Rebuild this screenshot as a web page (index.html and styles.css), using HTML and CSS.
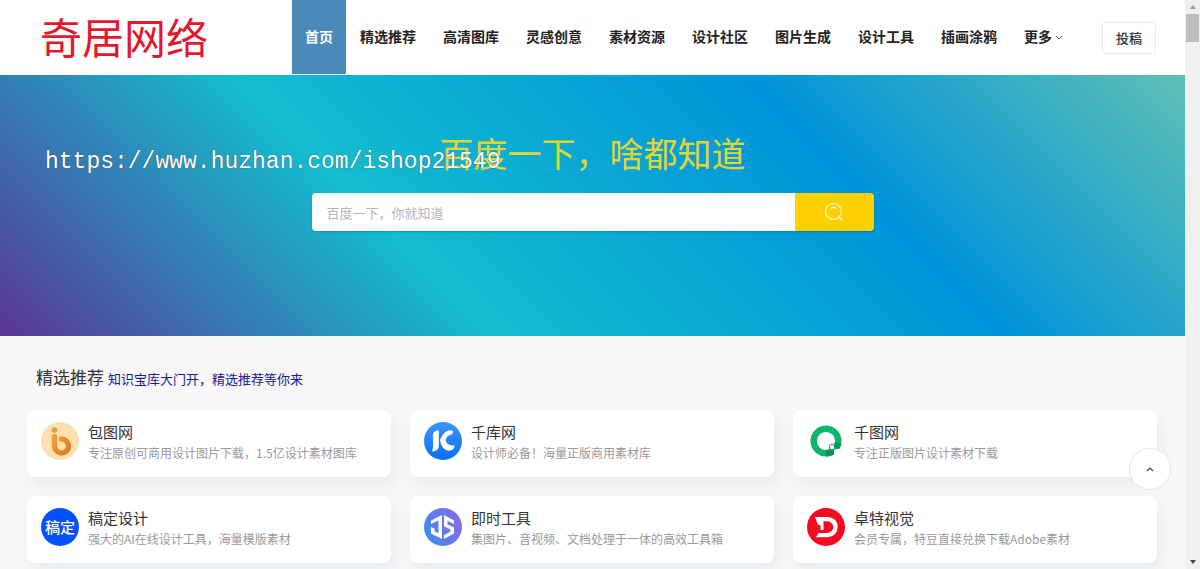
FILE: index.html
```html
<!DOCTYPE html>
<html lang="zh-CN">
<head>
    <meta charset="UTF-8">
    <meta name="viewport" content="width=device-width, initial-scale=1.0">
    <title>奇居网络</title>
    <link rel="stylesheet" href="styles.css">
</head>
<body>
    <div class="page">
        <header class="header">
            <a class="logo" href="#">奇居网络</a>
            <nav class="nav">
                <a class="active" href="#">首页</a>
                <a href="#">精选推荐</a>
                <a href="#">高清图库</a>
                <a href="#">灵感创意</a>
                <a href="#">素材资源</a>
                <a href="#">设计社区</a>
                <a href="#">图片生成</a>
                <a href="#">设计工具</a>
                <a href="#">插画涂鸦</a>
                <a href="#">更多
                    <svg width="8" height="6" viewBox="0 0 8 6"><path d="M1 1l3 3 3-3" fill="none" stroke="#555" stroke-width="1"/></svg>
                </a>
            </nav>
            <button class="post" type="button">投稿</button>
        </header>

        <section class="hero">
            <h1>百度一下，啥都知道</h1>
            <form class="search">
                <input type="text" placeholder="百度一下，你就知道" aria-label="百度一下，你就知道">
                <button type="button" aria-label="搜索">
                    <svg width="20" height="20" viewBox="0 0 20 20" fill="none" stroke="#fff6c8" stroke-width="1.3" stroke-linecap="round">
                        <circle cx="9.5" cy="9.5" r="7.9"/>
                        <path d="M15 15l3.2 3M7 6.200q2.500-1.500 5 0"/>
                    </svg>
                </button>
            </form>
            <span class="site-url">https://www.huzhan.com/ishop21549</span>
        </section>

        <main class="content">
            <div class="section-title">
                <h2>精选推荐</h2>
                <a href="#">知识宝库大门开，精选推荐等你来</a>
            </div>
            <div class="cards">
                <a class="card" href="#">
                    <svg class="icon" viewBox="0 0 38 38">
                        <defs>
                            <linearGradient id="bao" x1="0" y1="0" x2="1" y2="1">
                                <stop offset="0" stop-color="#eda23b"/>
                                <stop offset="1" stop-color="#dc7d20"/>
                            </linearGradient>
                        </defs>
                        <circle cx="19" cy="19" r="19" fill="#fde0b0"/>
                        <circle cx="13.500" cy="8" r="2.800" fill="#e0a045"/>
                        <path d="M13.500 14.500v9.500a7 7 0 1 0 7-7" fill="none" stroke="url(#bao)" stroke-width="5.400" stroke-linecap="round"/>
                    </svg>
                    <div class="info">
                        <h3>包图网</h3>
                        <p>专注原创可商用设计图片下载，1.5亿设计素材图库</p>
                    </div>
                </a>
                <a class="card" href="#">
                    <svg class="icon" viewBox="0 0 38 38">
                        <defs>
                            <linearGradient id="qian" x1="0" y1="0" x2="0" y2="1">
                                <stop offset="0" stop-color="#3d95fb"/>
                                <stop offset="1" stop-color="#0b6ff5"/>
                            </linearGradient>
                        </defs>
                        <circle cx="19" cy="19" r="19" fill="url(#qian)"/>
                        <path d="M9 12q1-3.500 5.800-3.500V25q-.8 4-6.800 4.500l1-4z" fill="#fff"/>
                        <path d="M16 18q3-7.500 8.500-9.500h4q1.500 3.500-2.500 4.500-4.200 1.500-4.200 5.800 1 5 9 4.700-.8 5-6 5.200-7.200-.7-8.800-10.700z" fill="#fff"/>
                    </svg>
                    <div class="info">
                        <h3>千库网</h3>
                        <p>设计师必备！海量正版商用素材库</p>
                    </div>
                </a>
                <a class="card" href="#">
                    <svg class="icon" viewBox="0 0 38 38">
                        <circle cx="19" cy="19" r="12.300" fill="none" stroke="#0db56d" stroke-width="6.400"/>
                        <path d="M31.200 20.500A12.300 12.300 0 0 1 19 31.300" fill="none" stroke="#07965a" stroke-width="6.400"/>
                        <path d="M27 27.500l8-1v9h-8z" fill="#fff"/>
                        <circle cx="25" cy="25" r="2.800" fill="#fff" stroke="#0a9d60" stroke-width="1"/>
                    </svg>
                    <div class="info">
                        <h3>千图网</h3>
                        <p>专注正版图片设计素材下载</p>
                    </div>
                </a>
                <a class="card" href="#">
                    <span class="icon icon-gaoding">稿定</span>
                    <div class="info">
                        <h3>稿定设计</h3>
                        <p>强大的AI在线设计工具，海量模版素材</p>
                    </div>
                </a>
                <a class="card" href="#">
                    <svg class="icon" viewBox="0 0 38 38">
                        <defs>
                            <linearGradient id="jishi" x1="0" y1=".7" x2="1" y2=".3">
                                <stop offset="0" stop-color="#3e8bf0"/>
                                <stop offset="1" stop-color="#8a6be6"/>
                            </linearGradient>
                        </defs>
                        <circle cx="19" cy="19" r="19" fill="url(#jishi)"/>
                        <path d="M7 12.500L18 7v24L7 25.500V19l3.500 1.500v2.700l4 2.100V12.500L7 16z" fill="#fff"/>
                        <path d="M20 7l10 5.500V16l-6.500-3.300v3.500l6.500 3.300v6L20 31v-3.800l6.500-3.700v-2L20 18.200z" fill="#fff"/>
                    </svg>
                    <div class="info">
                        <h3>即时工具</h3>
                        <p>集图片、音视频、文档处理于一体的高效工具箱</p>
                    </div>
                </a>
                <a class="card" href="#">
                    <svg class="icon" viewBox="0 0 38 38">
                        <circle cx="19" cy="19" r="19" fill="#f50a20"/>
                        <path d="M8 9h13q9.500 1.200 9.800 9.800-.8 9.500-9.800 10.500H8.800l3-4.300H20q6-.8 6.300-6-.3-5.300-6.300-5.800h-3.500V22h-3v-5H11z" fill="#fff"/>
                    </svg>
                    <div class="info">
                        <h3>卓特视觉</h3>
                        <p>会员专属，特豆直接兑换下载Adobe素材</p>
                    </div>
                </a>
            </div>
        </main>
    </div>

    <div class="scrollbar">
        <svg width="8" height="14" viewBox="0 0 8 14"><path d="M1 9l3-4 3 4z" fill="#999"/></svg>
        <div class="thumb"></div>
        <svg class="down" width="8" height="14" viewBox="0 0 8 14"><path d="M1 5h6L4 9z" fill="#444"/></svg>
    </div>

    <button class="to-top" type="button" aria-label="返回顶部">
        <svg width="8" height="6" viewBox="0 0 8 6"><path d="M1 5l3-3 3 3" fill="none" stroke="#444" stroke-width="1.200"/></svg>
    </button>
</body>
</html>
```
FILE: styles.css
```css
* {
    box-sizing: border-box;
}
body {
    display: grid;
    grid-template-columns: 1fr 15px;
    height: 100vh;
    margin: 0;
    overflow: hidden;
    background-color: #f7f7f7;
    color: #333;
    font-family: "Noto Sans CJK SC", sans-serif;
}
h1, h2, h3, p {
    margin: 0;
    font-weight: 400;
}
a {
    text-decoration: none;
}
button, input {
    font-family: inherit;
    padding: 0;
}
.page {
    min-width: 0;
    overflow: hidden;
}

.header {
    display: flex;
    align-items: center;
    height: 75px;
    padding: 0 29px 0 40px;
    background-color: #fff;
}
.logo {
    width: 252px;
    color: #e5162d;
    font-size: 42px;
    line-height: 72px;
    height: 75px;
}
.nav {
    display: flex;
    gap: 1px;
    height: 75px;
}
.nav a {
    padding: 0 13px;
    color: #222;
    font-size: 14px;
    font-weight: 700;
    line-height: 73px;
    white-space: nowrap;
}
.nav svg {
    vertical-align: middle;
}
.nav .active {
    height: 74px;
    background-color: #4b8ab8;
    color: #fff;
}
.post {
    width: 54px;
    height: 32px;
    margin-left: auto;
    border: 1px solid #eaeaea;
    border-radius: 4px;
    background-color: #fff;
    color: #333;
    font-size: 13px;
    font-weight: 500;
}

.hero {
    position: relative;
    height: 261px;
    padding-top: 53px;
    background: linear-gradient(45deg, #5a3694 0%, #13bdce 34%, #0094d9 70%, #5fc0b4 100%);
}
.hero h1 {
    margin-bottom: 15px;
    color: #e3d72f;
    font-size: 34px;
    line-height: 50px;
    text-align: center;
}
.search {
    display: flex;
    width: 562px;
    max-width: 90%;
    height: 38px;
    margin: 0 auto;
    border-radius: 4px;
    overflow: hidden;
    box-shadow: 0 1px 2px rgba(0, 0, 0, 0.2);
}
.search input {
    flex: 1;
    min-width: 0;
    padding: 0 15px;
    border: none;
    font-size: 13px;
}
.search input::placeholder {
    color: #b5b5b5;
}
.search button {
    display: flex;
    align-items: center;
    justify-content: center;
    width: 79px;
    border: none;
    background-color: #ffd000;
}
.site-url {
    position: absolute;
    left: 45px;
    top: 71px;
    color: #fff;
    font-family: "Liberation Mono", monospace;
    font-size: 23px;
    line-height: 32px;
    text-shadow: 0 0 1px #333;
}

.content {
    padding: 29px 28px 30px 27px;
}
.section-title {
    display: flex;
    align-items: baseline;
    gap: 4px;
    margin-bottom: 19px;
    padding-left: 9px;
    line-height: 24px;
}
.section-title h2 {
    font-size: 17px;
}
.section-title a {
    color: #1c1896;
    font-size: 13px;
}
.cards {
    display: grid;
    grid-template-columns: repeat(3, 1fr);
    gap: 19px;
}
.card {
    display: flex;
    gap: 9px;
    height: 67px;
    padding: 12px 14px;
    border-radius: 8px;
    background-color: #fff;
    box-shadow: 4px 8px 14px rgba(100, 140, 180, 0.1);
}
.icon {
    flex: none;
    width: 38px;
    height: 38px;
}
.icon-gaoding {
    border-radius: 50%;
    background-color: #0550fa;
    color: #fff;
    font-size: 15px;
    font-weight: 500;
    line-height: 38px;
    text-align: center;
}
.info {
    min-width: 0;
    white-space: nowrap;
}
.info h3 {
    color: #333;
    font-size: 15px;
    line-height: 20px;
}
.info p {
    overflow: hidden;
    color: #999;
    font-size: 12px;
    line-height: 22px;
    text-overflow: ellipsis;
}

.scrollbar {
    display: flex;
    flex-direction: column;
    align-items: center;
    background-color: #f0f0f0;
}
.thumb {
    width: 13px;
    height: 28px;
    background-color: #bdbdbd;
}
.down {
    margin-top: auto;
}
.to-top {
    position: fixed;
    right: 29px;
    bottom: 79px;
    display: flex;
    align-items: center;
    justify-content: center;
    width: 42px;
    height: 42px;
    border: 1px solid #e6e6e6;
    border-radius: 50%;
    background-color: #fff;
}
```
